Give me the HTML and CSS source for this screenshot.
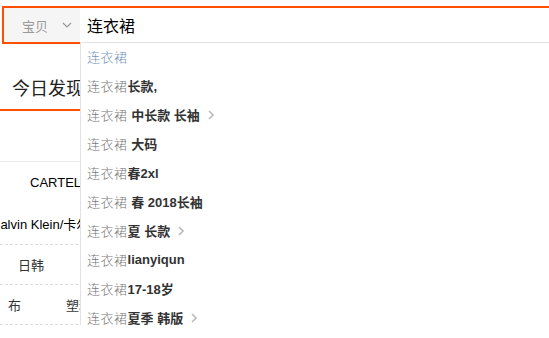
FILE: index.html
```html
<!DOCTYPE html>
<html lang="zh-CN">
<head>
  <meta charset="UTF-8" />
  <title>淘宝搜索</title>
  <link rel="stylesheet" href="styles.css">
</head>
<body>

  <div class="search">
    <div class="search-box">
      <div class="scope">
        <span>宝贝</span>
        <svg class="caret" width="10" height="6" viewBox="0 0 10 6"><polyline points="1,1 5,5 9,1" fill="none" stroke="#999" stroke-width="1.2"/></svg>
      </div>
      <div class="query">连衣裙</div>
    </div>

    <ul class="suggest">
      <li class="current"><span class="key">连衣裙</span></li>
      <li><span class="key">连衣裙</span><b>长款,</b></li>
      <li><span class="key">连衣裙</span><b>&nbsp;中长款 长袖</b><svg class="more" width="6" height="10" viewBox="0 0 6 10"><polyline points="1,1 5,5 1,9" fill="none" stroke="#bbb" stroke-width="1.6"/></svg></li>
      <li><span class="key">连衣裙</span><b>&nbsp;大码</b></li>
      <li><span class="key">连衣裙</span><b>春2xl</b></li>
      <li><span class="key">连衣裙</span><b>&nbsp;春 2018长袖</b></li>
      <li><span class="key">连衣裙</span><b>夏 长款</b><svg class="more" width="6" height="10" viewBox="0 0 6 10"><polyline points="1,1 5,5 1,9" fill="none" stroke="#bbb" stroke-width="1.6"/></svg></li>
      <li><span class="key">连衣裙</span><b>lianyiqun</b></li>
      <li><span class="key">连衣裙</span><b>17-18岁</b></li>
      <li><span class="key">连衣裙</span><b>夏季 韩版</b><svg class="more" width="6" height="10" viewBox="0 0 6 10"><polyline points="1,1 5,5 1,9" fill="none" stroke="#bbb" stroke-width="1.6"/></svg></li>
    </ul>
  </div>

  <main class="discover">
    <div class="discover-head">
      <h2>今日发现</h2>
    </div>

    <div class="brands">
      <div class="brand-top">
        <div class="brand-cell">CARTEL</div>
        <div class="brand-cell"><span class="brand-long">Calvin Klein/卡尔文克莱</span></div>
      </div>
      <div class="brand-row row-center">
        <span>日韩</span>
      </div>
      <div class="brand-row row-split">
        <span>布</span>
        <span>塑料</span>
      </div>
    </div>
  </main>

</body>
</html>
```

FILE: styles.css
```css
body {
  margin: 0;
  padding: 0;
  width: 549px;
  overflow: hidden;
  font-family: 'Liberation Sans', 'Noto Sans CJK SC', sans-serif;
  color: #333;
  background: white;
}

.search {
  position: relative;
  padding: 6px 0 0 2px;
  z-index: 2;
}

.search-box {
  display: flex;
  height: 34px;
  border: 2px solid #ff5000;
  margin-right: -20px;
}

.scope {
  width: 76px;
  background: #f5f5f5;
  display: flex;
  align-items: center;
  box-sizing: border-box;
  padding-left: 18px;
  font-size: 13px;
  color: #999;
}

.scope .caret {
  margin-left: 14px;
}

.query {
  flex: 1;
  display: flex;
  align-items: center;
  padding-left: 7px;
  font-size: 16px;
  color: #000;
}

.suggest {
  position: absolute;
  top: 42px;
  left: 80px;
  right: -20px;
  margin: 0;
  padding: 0 0 20px;
  list-style: none;
  background: white;
  border-top: 1px solid #e2e2e2;
  border-left: 1px solid #e2e2e2;
}

.suggest li {
  height: 27px;
  padding: 0 0 2px 6px;
  display: flex;
  align-items: center;
  font-size: 13px;
}

.suggest .key {
  color: #777;
  font-weight: 300;
  letter-spacing: 0.5px;
}

.suggest .current .key {
  color: #7191bd;
}

.suggest b {
  color: #333;
  white-space: pre;
}

.suggest .more {
  margin-left: 8px;
}

.discover-head {
  border-bottom: 2px solid #ff5000;
  padding: 33px 0 8px 12px;
}

.discover-head h2 {
  margin: 0;
  font-size: 18px;
  line-height: 24px;
  font-weight: normal;
  color: #222;
}

.brands {
  margin-top: 50px;
  border-top: 1px solid #ececec;
  font-size: 13px;
}

.brand-top {
  display: grid;
  grid-template-columns: 80px;
  border-bottom: 1px dashed #ddd;
  color: #000;
}

.brand-cell {
  height: 41px;
  display: flex;
  align-items: center;
  padding-left: 30px;
  white-space: nowrap;
  overflow: hidden;
}

.brand-long {
  flex: none;
  margin-left: -39px;
}

.brand-row {
  height: 39px;
  display: flex;
  align-items: center;
  border-bottom: 1px dashed #ddd;
  color: #333;
}

.row-center {
  padding-left: 18px;
}

.row-split {
  padding-left: 8px;
  gap: 45px;
}
```
